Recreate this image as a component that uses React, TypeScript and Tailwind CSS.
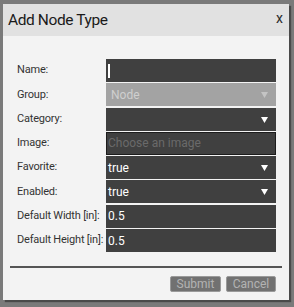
import React from 'react';

const Arrow = ({ muted }: { muted?: boolean }) => (
  <svg width="7" height="6" viewBox="0 0 7 6" className="absolute right-[8px] top-[9px]">
    <path d="M0 0 H7 L3.5 6 Z" fill={muted ? '#c4c4c4' : '#ffffff'} />
  </svg>
);

type Row = { label: string; kind: 'text' | 'select' | 'disabled' | 'file'; value?: string };

const rows: Row[] = [
  { label: 'Name:', kind: 'text', value: '' },
  { label: 'Group:', kind: 'disabled', value: 'Node' },
  { label: 'Category:', kind: 'select', value: '' },
  { label: 'Image:', kind: 'file', value: 'Choose an image' },
  { label: 'Favorite:', kind: 'select', value: 'true' },
  { label: 'Enabled:', kind: 'select', value: 'true' },
  { label: 'Default Width [in]:', kind: 'text', value: '0.5' },
  { label: 'Default Height [in]:', kind: 'text', value: '0.5' },
];

const Field = ({ row }: { row: Row }) => {
  if (row.kind === 'disabled') {
    return (
      <div className="relative w-[170px] h-[23px] bg-[#a3a3a3] text-[#cfcfcf] pl-[5px] flex items-center">
        {row.value}
        <Arrow muted />
      </div>
    );
  }
  if (row.kind === 'file') {
    return (
      <div className="w-[170px] h-[23px] bg-[#404040] border border-[#1c1c1c] text-[#6a6a6a] pl-[1px] flex items-center">
        {row.value}
      </div>
    );
  }
  return (
    <div className="relative w-[170px] h-[23px] bg-[#404040] text-white pl-[2px] flex items-center">
      {row.label === 'Name:' ? <span className="w-[2px] h-[14px] bg-white" /> : row.value}
      {row.kind === 'select' && <Arrow />}
    </div>
  );
};

const App: React.FC = () => {
  return (
    <div className="w-[294px] h-[307px] bg-[#7a7a7a] pl-[3px] pt-[4px] overflow-hidden" style={{ fontFamily: 'Roboto, "Liberation Sans", sans-serif' }}>
      <div className="w-[286px] h-[296px] bg-[#f3f3f3] flex flex-col shadow-[2px_2px_1px_#4a4a4a]">
        {/* Header */}
        <div className="h-[32px] bg-[#e1e1e1] flex items-center justify-between pl-[5px] pr-[6px]">
          <span className="text-[15.5px] tracking-[-0.4px] text-[#1a1a1a] pt-[1px]">Add Node Type</span>
          <span className="text-[14px] text-[#2a2a2a] mb-[4px]">x</span>
        </div>

        {/* Form */}
        <div className="flex flex-col gap-[1.3px] pt-[23px] text-[12px]">
          {rows.map((r) => (
            <div key={r.label} className="flex items-center h-[23px]">
              <span className="w-[103px] pl-[14px] text-[11px] tracking-[-0.2px] text-[#333] whitespace-nowrap">{r.label}</span>
              <Field row={r} />
            </div>
          ))}
        </div>

        <div className="mx-[7px] mt-[14px] h-[1.5px] bg-[#555]" />

        <div className="flex justify-end gap-[5px] pr-[13px] mt-[8px] text-[12px]">
          <button className="w-[51px] h-[16px] bg-[#717171] border border-[#9a9a9a] rounded-[2px] text-[#b3b3b3] leading-none">Submit</button>
          <button className="w-[50px] h-[16px] bg-[#717171] border border-[#9a9a9a] rounded-[2px] text-[#b3b3b3] leading-none">Cancel</button>
        </div>
      </div>
    </div>
  );
};

export default App;
